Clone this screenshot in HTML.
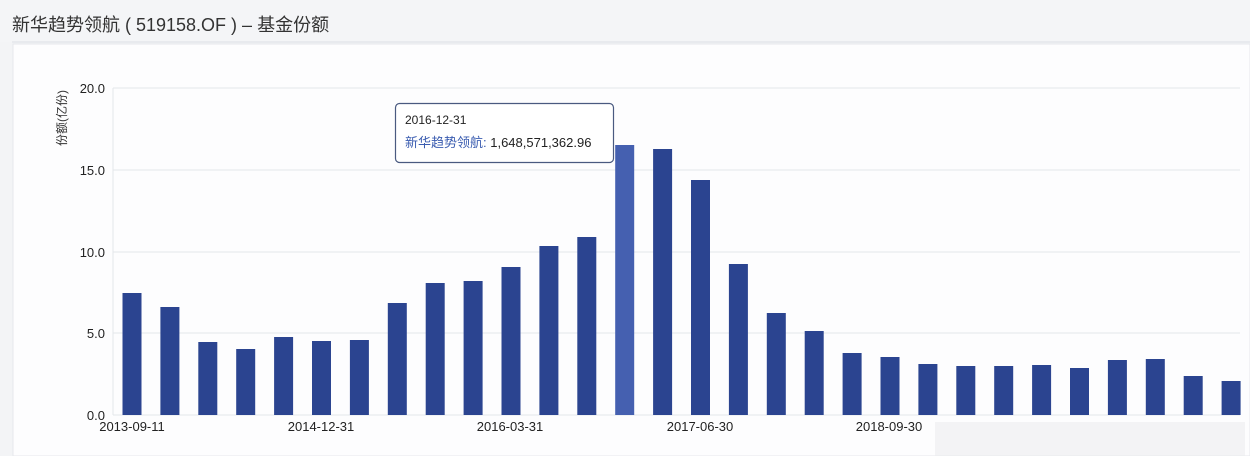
<!DOCTYPE html>
<html><head><meta charset="utf-8"><style>
body{margin:0;width:1250px;height:456px;background:#f3f4f6;overflow:hidden;font-family:"Liberation Sans","Noto Sans CJK SC",sans-serif}
</style></head><body>
<svg width="1250" height="456" xmlns="http://www.w3.org/2000/svg" style="position:absolute;left:0;top:0">
<rect x="0" y="0" width="1250" height="42" fill="#f4f5f7"/>
<line x1="12" y1="42" x2="1250" y2="42" stroke="#dde0e5"/>
<rect x="13" y="44" width="1237" height="412" fill="#fdfdfe" stroke="#e6e8ec"/>
<text x="12" y="31" font-size="18" fill="#333" font-family="Liberation Sans,Noto Sans CJK SC,sans-serif">新华趋势领航 ( 519158.OF ) – 基金份额</text>
<g stroke="#e4e6ea" stroke-width="1">
<line x1="113" y1="88" x2="1240" y2="88"/>
<line x1="113" y1="170" x2="1240" y2="170"/>
<line x1="113" y1="252" x2="1240" y2="252"/>
<line x1="113" y1="333" x2="1240" y2="333"/>
<line x1="113" y1="415" x2="1240" y2="415"/>
<line x1="113" y1="88" x2="113" y2="415"/>
</g>
<g font-size="13" fill="#222" text-anchor="end">
<text x="105" y="93">20.0</text><text x="105" y="175">15.0</text><text x="105" y="257">10.0</text><text x="105" y="338">5.0</text><text x="105" y="420">0.0</text>
</g>
<text transform="translate(66,118) rotate(-90)" font-size="12" fill="#333" text-anchor="middle">份额(亿份)</text>
<g fill="#2b4490" id="bars"></g>
<g font-size="13" fill="#222" text-anchor="middle">
<text x="132" y="431">2013-09-11</text><text x="321" y="431">2014-12-31</text><text x="510" y="431">2016-03-31</text><text x="700" y="431">2017-06-30</text><text x="889" y="431">2018-09-30</text>
</g>
<rect x="935" y="422" width="310" height="34" fill="#ececee" opacity="0.6"/>
<rect x="395.5" y="103.5" width="218" height="59" rx="4" fill="#fff" stroke="#4a5a80" stroke-width="1.2"/>
<text x="405" y="124" font-size="12" fill="#222">2016-12-31</text>
<text x="405" y="147" font-size="13" fill="#3a5cb0">新华趋势领航:<tspan fill="#222"> 1,648,571,362.96</tspan></text>
</svg>
<script>
var t=[293,307,342,349,337,341,340,303,283,281,267,246,237,145,149,180,264,313,331,353,357,364,366,366,365,368,360,359,376,381];
var g=document.getElementById('bars'),s='';
for(var i=0;i<30;i++){var cx=132+i*37.9;s+='<rect x="'+(cx-9.5)+'" y="'+t[i]+'" width="19" height="'+(415-t[i])+'"'+(i==13?' fill="#4560b0"':'')+'/>';}
g.innerHTML=s;
</script>
</body></html>
